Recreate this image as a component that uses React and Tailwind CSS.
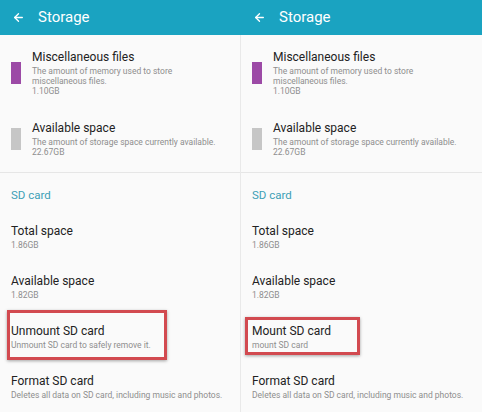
import { ArrowLeft } from 'lucide-react';

const Header = () => (
  <div className="h-[35px] shrink-0 bg-[#1aa3c1] flex items-center text-white">
    <ArrowLeft className="ml-[12px] h-[13px] w-[13px]" strokeWidth={2.5} />
    <span className="ml-[13px] text-[15px] leading-none">Storage</span>
  </div>
);

const UsageRow = ({ color, title, lines, size, className }) => (
  <div className={`flex items-center ${className}`}>
    <div className={`ml-[11px] w-[10px] h-[22px] ${color}`} />
    <div className="ml-[11px]">
      <div className="text-[12px] leading-[16px] text-[#222]">{title}</div>
      <div className="mt-px text-[8.5px] leading-[10px] text-[#8e8e8e]">
        {lines.map((l) => (
          <div key={l}>{l}</div>
        ))}
        <div>{size}</div>
      </div>
    </div>
  </div>
);

const SdRow = ({ title, sub, box }) => (
  <div className="relative h-[50px] shrink-0 pl-[11px]">
    <div className="text-[12px] leading-[16px] text-[#222]">{title}</div>
    <div className="mt-px text-[8.5px] leading-[10px] text-[#8e8e8e]">{sub}</div>
    {box}
  </div>
);

const Panel = ({ unmount, className }) => (
  <div className={`flex flex-col ${className}`}>
    <Header />
    <div className="flex-1 bg-[#fafafa]">
      <UsageRow
        className="pt-[14px]"
        color="bg-[#9c4aa6]"
        title="Miscellaneous files"
        lines={['The amount of memory used to store', 'miscellaneous files.']}
        size="1.10GB"
      />
      <UsageRow
        className="pt-[24px]"
        color="bg-[#c6c6c6]"
        title="Available space"
        lines={['The amount of storage space currently available.']}
        size="22.67GB"
      />
      <div className="mt-[15px] border-t border-[#e6e6e6]" />
      <div className="pl-[11px] pt-[14px] text-[11.5px] leading-[16px] text-[#3d9fb6]">SD card</div>
      <div className="pt-[20px]">
        <SdRow title="Total space" sub="1.86GB" />
        <SdRow title="Available space" sub="1.82GB" />
        {unmount ? (
          <SdRow
            title="Unmount SD card"
            sub="Unmount SD card to safely remove it."
            box={
              <div className="absolute left-[7px] top-[-13px] w-[160px] h-[50px] border-[3px] border-[#d24a50] shadow-[0_1px_3px_rgba(0,0,0,0.35)]" />
            }
          />
        ) : (
          <SdRow
            title="Mount SD card"
            sub="mount SD card"
            box={
              <div className="absolute left-[4px] top-[-6px] w-[115px] h-[38px] border-[3px] border-[#d24a50] shadow-[0_1px_3px_rgba(0,0,0,0.35)]" />
            }
          />
        )}
        <SdRow title="Format SD card" sub="Deletes all data on SD card, including music and photos." />
      </div>
    </div>
  </div>
);

export default function App() {
  return (
    <div className="w-[482px] h-[412px] overflow-hidden flex font-['Roboto',sans-serif]">
      <Panel unmount className="w-[240px]" />
      <div className="w-px flex flex-col">
        <div className="h-[35px] shrink-0 bg-[#1aa3c1]" />
        <div className="flex-1 bg-[#e9e9e9]" />
      </div>
      <Panel className="flex-1" />
    </div>
  );
}
